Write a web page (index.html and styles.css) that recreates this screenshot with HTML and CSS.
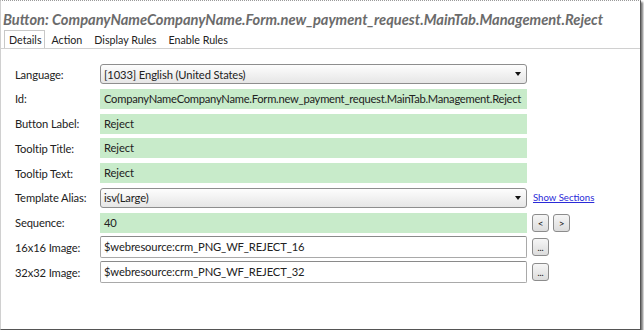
FILE: index.html
```html
<!DOCTYPE html>
<html>
<head>
<meta charset="utf-8">
<link rel="stylesheet" href="styles.css">
</head>
<body>
<div class="frame">
  <h1 class="title">Button: CompanyNameCompanyName.Form.new_payment_request.MainTab.Management.Reject</h1>
  <div class="tabs">
    <span class="tab active">Details</span>
    <span class="tab">Action</span>
    <span class="tab">Display Rules</span>
    <span class="tab">Enable Rules</span>
  </div>
  <div class="panel">
    <div class="form">
      <label class="lbl">Language:</label>
      <div class="select"><span>[1033] English (United States)</span><span class="arrow"></span></div>
      <div class="extra"></div>

      <label class="lbl">Id:</label>
      <div class="green id">CompanyNameCompanyName.Form.new_payment_request.MainTab.Management.Reject</div>
      <div class="extra"></div>

      <label class="lbl">Button Label:</label>
      <div class="green">Reject</div>
      <div class="extra"></div>

      <label class="lbl">Tooltip Title:</label>
      <div class="green">Reject</div>
      <div class="extra"></div>

      <label class="lbl">Tooltip Text:</label>
      <div class="green">Reject</div>
      <div class="extra"></div>

      <label class="lbl">Template Alias:</label>
      <div class="select"><span>isv(Large)</span><span class="arrow"></span></div>
      <div class="extra"><a class="link" href="#">Show Sections</a></div>

      <label class="lbl">Sequence:</label>
      <div class="green">40</div>
      <div class="extra"><span class="btn">&lt;</span><span class="btn">&gt;</span></div>

      <label class="lbl">16x16 Image:</label>
      <div class="input">$webresource:crm_PNG_WF_REJECT_16</div>
      <div class="extra"><span class="btn dots">...</span></div>

      <label class="lbl">32x32 Image:</label>
      <div class="input">$webresource:crm_PNG_WF_REJECT_32</div>
      <div class="extra"><span class="btn dots">...</span></div>
    </div>
  </div>
</div>
</body>
</html>
```

FILE: styles.css
```css
html, body {
  margin: 0;
  padding: 0;
  background: #ffffff;
}
body {
  font-family: Lato, "Open Sans", sans-serif;
  color: #222;
}
.frame {
  box-sizing: border-box;
  width: 641px;
  height: 330px;
  border-top: 1px dotted #9a9a9a;
  border-left: 1px solid #d0d0d0;
  border-right: 1px solid #555;
  border-bottom: 1px solid #555;
  box-shadow: 2px 2px 2px #777;
  display: flex;
  flex-direction: column;
  background: #fff;
}
.title {
  margin: 0;
  padding: 10px 0 0 2px;
  height: 20px;
  font-size: 14.65px;
  font-weight: bold;
  font-style: italic;
  color: #6b6b6b;
  line-height: 18px;
  white-space: nowrap;
}
.tabs {
  display: flex;
  align-items: flex-end;
  height: 17px;
  padding-left: 3px;
  font-size: 10.7px;
  line-height: 15px;
}
.tab {
  padding: 1px 6px 1px 6px;
  color: #222;
}
.tab.active {
  border: 1px solid #c8c8c8;
  border-bottom: none;
  background: #fff;
  padding: 1px 2px 1px 4px;
  margin-right: 1px;
}
.panel {
  flex: 1;
  border-top: 1px solid #d0d0d0;
  padding: 15px 0 0 14px;
}
.form {
  display: grid;
  grid-template-columns: 85px 427px auto;
  grid-auto-rows: 20px;
  row-gap: 4.75px;
  align-items: center;
  font-size: 11.2px;
  letter-spacing: -0.12px;
}
.lbl {
  color: #222;
}
.green {
  background: #c8ebca;
  height: 20px;
  line-height: 20px;
  padding-left: 4px;
  white-space: nowrap;
  overflow: hidden;
}
.green.id {
  letter-spacing: -0.26px;
}
.select {
  box-sizing: border-box;
  height: 20px;
  border: 1px solid #8e8e8e;
  border-radius: 3px;
  background: linear-gradient(#fdfdfd, #e6e6e6);
  display: flex;
  align-items: center;
  justify-content: space-between;
  padding: 0 5px 0 3px;
}
.arrow {
  width: 0;
  height: 0;
  border-left: 3px solid transparent;
  border-right: 3px solid transparent;
  border-top: 4px solid #111;
}
.input {
  box-sizing: border-box;
  height: 22px;
  line-height: 20px;
  border: 1px solid #a9a9a9;
  border-top-color: #8a8a8a;
  border-radius: 2px;
  padding-left: 3px;
  background: #fff;
}
.extra {
  display: flex;
  align-items: center;
  gap: 4px;
  padding-left: 5px;
}
.link {
  font-size: 9.6px;
  letter-spacing: 0;
  color: #2a2ad8;
  text-decoration: underline;
  margin-left: 1px;
}
.btn {
  box-sizing: border-box;
  width: 17px;
  height: 18px;
  border: 1px solid #8c8c8c;
  border-radius: 3px;
  background: linear-gradient(#f6f6f6, #dcdcdc);
  display: flex;
  align-items: center;
  justify-content: center;
  font-size: 10px;
  line-height: 1;
  color: #111;
}
.btn.dots {
  align-items: flex-end;
  padding-bottom: 3px;
  font-size: 9px;
}
```
